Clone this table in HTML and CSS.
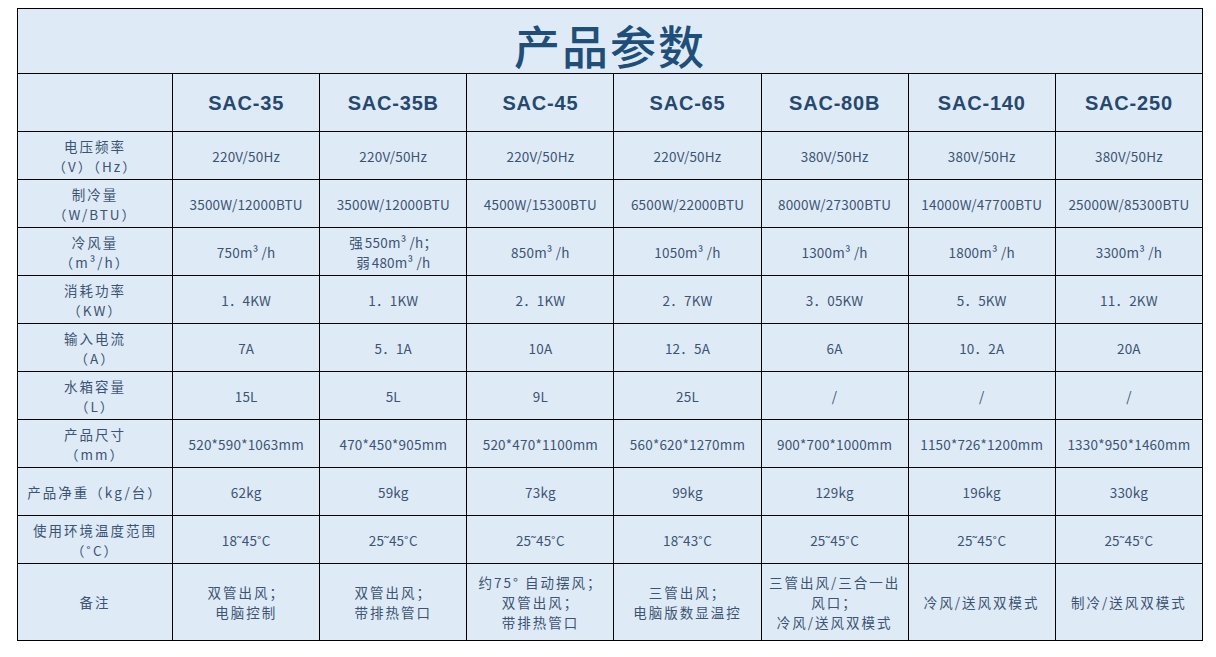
FILE: index.html
```html
<!DOCTYPE html>
<html lang="zh-CN">
<head>
<meta charset="utf-8">
<title>产品参数</title>
<link rel="stylesheet" href="styles.css">
</head>
<body>
<table class="spec">
  <colgroup>
    <col class="c-label">
    <col class="c-val"><col class="c-val"><col class="c-val"><col class="c-val"><col class="c-val"><col class="c-val"><col class="c-val">
  </colgroup>
  <tr class="r-title"><td colspan="8" class="title">产品参数</td></tr>
  <tr class="r-head">
    <td></td>
    <td class="model">SAC-35</td><td class="model">SAC-35B</td><td class="model">SAC-45</td><td class="model">SAC-65</td><td class="model">SAC-80B</td><td class="model">SAC-140</td><td class="model">SAC-250</td>
  </tr>
  <tr class="r-data">
    <td class="label">电压频率<br>（V）（Hz）</td>
    <td>220V/50Hz</td><td>220V/50Hz</td><td>220V/50Hz</td><td>220V/50Hz</td><td>380V/50Hz</td><td>380V/50Hz</td><td>380V/50Hz</td>
  </tr>
  <tr class="r-data">
    <td class="label">制冷量<br>（W/BTU）</td>
    <td>3500W/12000BTU</td><td>3500W/12000BTU</td><td>4500W/15300BTU</td><td>6500W/22000BTU</td><td>8000W/27300BTU</td><td>14000W/47700BTU</td><td>25000W/85300BTU</td>
  </tr>
  <tr class="r-data">
    <td class="label">冷风量<br>（m³/h）</td>
    <td>750m³ /h</td><td><span class="zh">强</span>550m³ /h；<br><span class="zh">弱</span>480m³ /h</td><td>850m³ /h</td><td>1050m³ /h</td><td>1300m³ /h</td><td>1800m³ /h</td><td>3300m³ /h</td>
  </tr>
  <tr class="r-data">
    <td class="label">消耗功率<br>（KW）</td>
    <td>1．4KW</td><td>1．1KW</td><td>2．1KW</td><td>2．7KW</td><td>3．05KW</td><td>5．5KW</td><td>11．2KW</td>
  </tr>
  <tr class="r-data">
    <td class="label">输入电流<br>（A）</td>
    <td>7A</td><td>5．1A</td><td>10A</td><td>12．5A</td><td>6A</td><td>10．2A</td><td>20A</td>
  </tr>
  <tr class="r-data">
    <td class="label">水箱容量<br>（L）</td>
    <td>15L</td><td>5L</td><td>9L</td><td>25L</td><td>/</td><td>/</td><td>/</td>
  </tr>
  <tr class="r-data">
    <td class="label">产品尺寸<br>（mm）</td>
    <td>520*590*1063mm</td><td>470*450*905mm</td><td>520*470*1100mm</td><td>560*620*1270mm</td><td>900*700*1000mm</td><td>1150*726*1200mm</td><td>1330*950*1460mm</td>
  </tr>
  <tr class="r-data">
    <td class="label">产品净重（kg/台）</td>
    <td>62kg</td><td>59kg</td><td>73kg</td><td>99kg</td><td>129kg</td><td>196kg</td><td>330kg</td>
  </tr>
  <tr class="r-data">
    <td class="label">使用环境温度范围<br>（˚C）</td>
    <td>18˜45˚C</td><td>25˜45˚C</td><td>25˜45˚C</td><td>18˜43˚C</td><td>25˜45˚C</td><td>25˜45˚C</td><td>25˜45˚C</td>
  </tr>
  <tr class="r-note">
    <td class="label">备注</td>
    <td>双管出风；<br>电脑控制</td>
    <td>双管出风；<br>带排热管口</td>
    <td>约75° 自动摆风；<br>双管出风；<br>带排热管口</td>
    <td>三管出风；<br>电脑版数显温控</td>
    <td>三管出风/三合一出<br>风口；<br>冷风/送风双模式</td>
    <td>冷风/送风双模式</td>
    <td>制冷/送风双模式</td>
  </tr>
</table>
</body>
</html>
```
FILE: styles.css
```css
html, body {
  margin: 0;
  padding: 0;
  background: #ffffff;
}
body {
  padding: 8px 0 0 17px;
  font-family: "Noto Sans CJK SC", "Liberation Sans", sans-serif;
}
.spec {
  border-collapse: collapse;
  table-layout: fixed;
  width: 1186px;
  background: #deebf7;
}
.c-label { width: 155px; }
.c-val { width: 147px; }
.spec td {
  border: 1px solid #000000;
  text-align: center;
  vertical-align: middle;
  padding: 0;
  color: #3d5372;
  font-size: 13.5px;
  line-height: 20px;
  letter-spacing: 0.2px;
}
.spec .label {
  letter-spacing: 2px;
}
.spec .zh {
  letter-spacing: 2px;
}
.spec .r-title td {
  height: 58px;
  padding-top: 6px;
}
.spec .title {
  font-size: 46px;
  line-height: 56px;
  color: #1f4e79;
  font-weight: 500;
  letter-spacing: 2px;
}
.spec .r-head td { height: 56px; padding-top: 1px; }
.spec .model {
  font-family: "Liberation Sans", "Noto Sans CJK SC", sans-serif;
  font-size: 20px;
  font-weight: 700;
  color: #26486e;
  letter-spacing: 0.8px;
}
.spec .r-data td { height: 47px; }
.spec .r-note td {
  height: 76px;
  letter-spacing: 2px;
}
```
